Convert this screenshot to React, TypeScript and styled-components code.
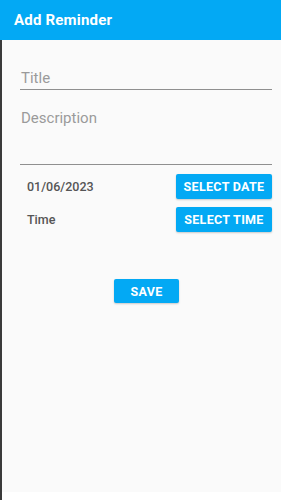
import * as React from "react";
import styled, { createGlobalStyle } from "styled-components";

const GlobalStyle = createGlobalStyle`
  html, body {
    margin: 0;
    padding: 0;
    background: #ffffff;
  }
  body {
    font-family: Roboto, "Liberation Sans", sans-serif;
  }
`;

const Screen = styled.div`
  display: flex;
  flex-direction: column;
  width: 281px;
  height: 500px;
  overflow: hidden;
`;

const AppBar = styled.header`
  display: flex;
  align-items: center;
  height: 40px;
  padding: 0 14px;
  background: #03a9f4;
  color: #ffffff;
  font-size: 15px;
  font-weight: 700;
  letter-spacing: 0.2px;
  flex-shrink: 0;
`;

const Body = styled.div`
  flex: 1;
  display: flex;
  flex-direction: column;
  border-left: 2px solid #3a3a3a;
`;

const Content = styled.main`
  height: 452px;
  background: #fafafa;
  padding: 0 9px 0 18px;
  display: flex;
  flex-direction: column;
`;

const Field = styled.label<{ $top: number; $bottom: number }>`
  display: block;
  margin-top: ${(p) => p.$top}px;
  padding-bottom: ${(p) => p.$bottom}px;
  padding-left: 1px;
  border-bottom: 1px solid #8f8f8f;
  color: #9a9a9a;
  font-size: 15px;
  line-height: 18px;
`;

const Row = styled.div<{ $top: number }>`
  display: flex;
  align-items: center;
  justify-content: space-between;
  margin-top: ${(p) => p.$top}px;
  padding-left: 7px;
`;

const RowLabel = styled.span`
  color: #555555;
  font-size: 12.5px;
  font-weight: 500;
`;

const Button = styled.button`
  height: 25px;
  padding: 0 6px;
  border: none;
  border-radius: 2px;
  background: #03a9f4;
  color: #ffffff;
  font-family: Roboto, "Liberation Sans", sans-serif;
  font-size: 12.5px;
  font-weight: 700;
  letter-spacing: 0.3px;
  text-transform: uppercase;
  box-shadow: 0 1px 2px rgba(0, 0, 0, 0.2);
`;

const WideButton = styled(Button)`
  width: 96px;
`;

const SaveButton = styled(Button)`
  align-self: center;
  width: 65px;
  height: 24px;
  margin-top: 47px;
  margin-left: 1px;
`;

export default function App() {
  return (
    <Screen>
      <GlobalStyle />
      <AppBar>Add Reminder</AppBar>
      <Body>
        <Content>
          <Field $top={29} $bottom={2}>
            Title
          </Field>
          <Field $top={19} $bottom={37}>
            Description
          </Field>
          <Row $top={9}>
            <RowLabel>01/06/2023</RowLabel>
            <WideButton>Select Date</WideButton>
          </Row>
          <Row $top={8}>
            <RowLabel>Time</RowLabel>
            <WideButton>Select Time</WideButton>
          </Row>
          <SaveButton>Save</SaveButton>
        </Content>
      </Body>
    </Screen>
  );
}
